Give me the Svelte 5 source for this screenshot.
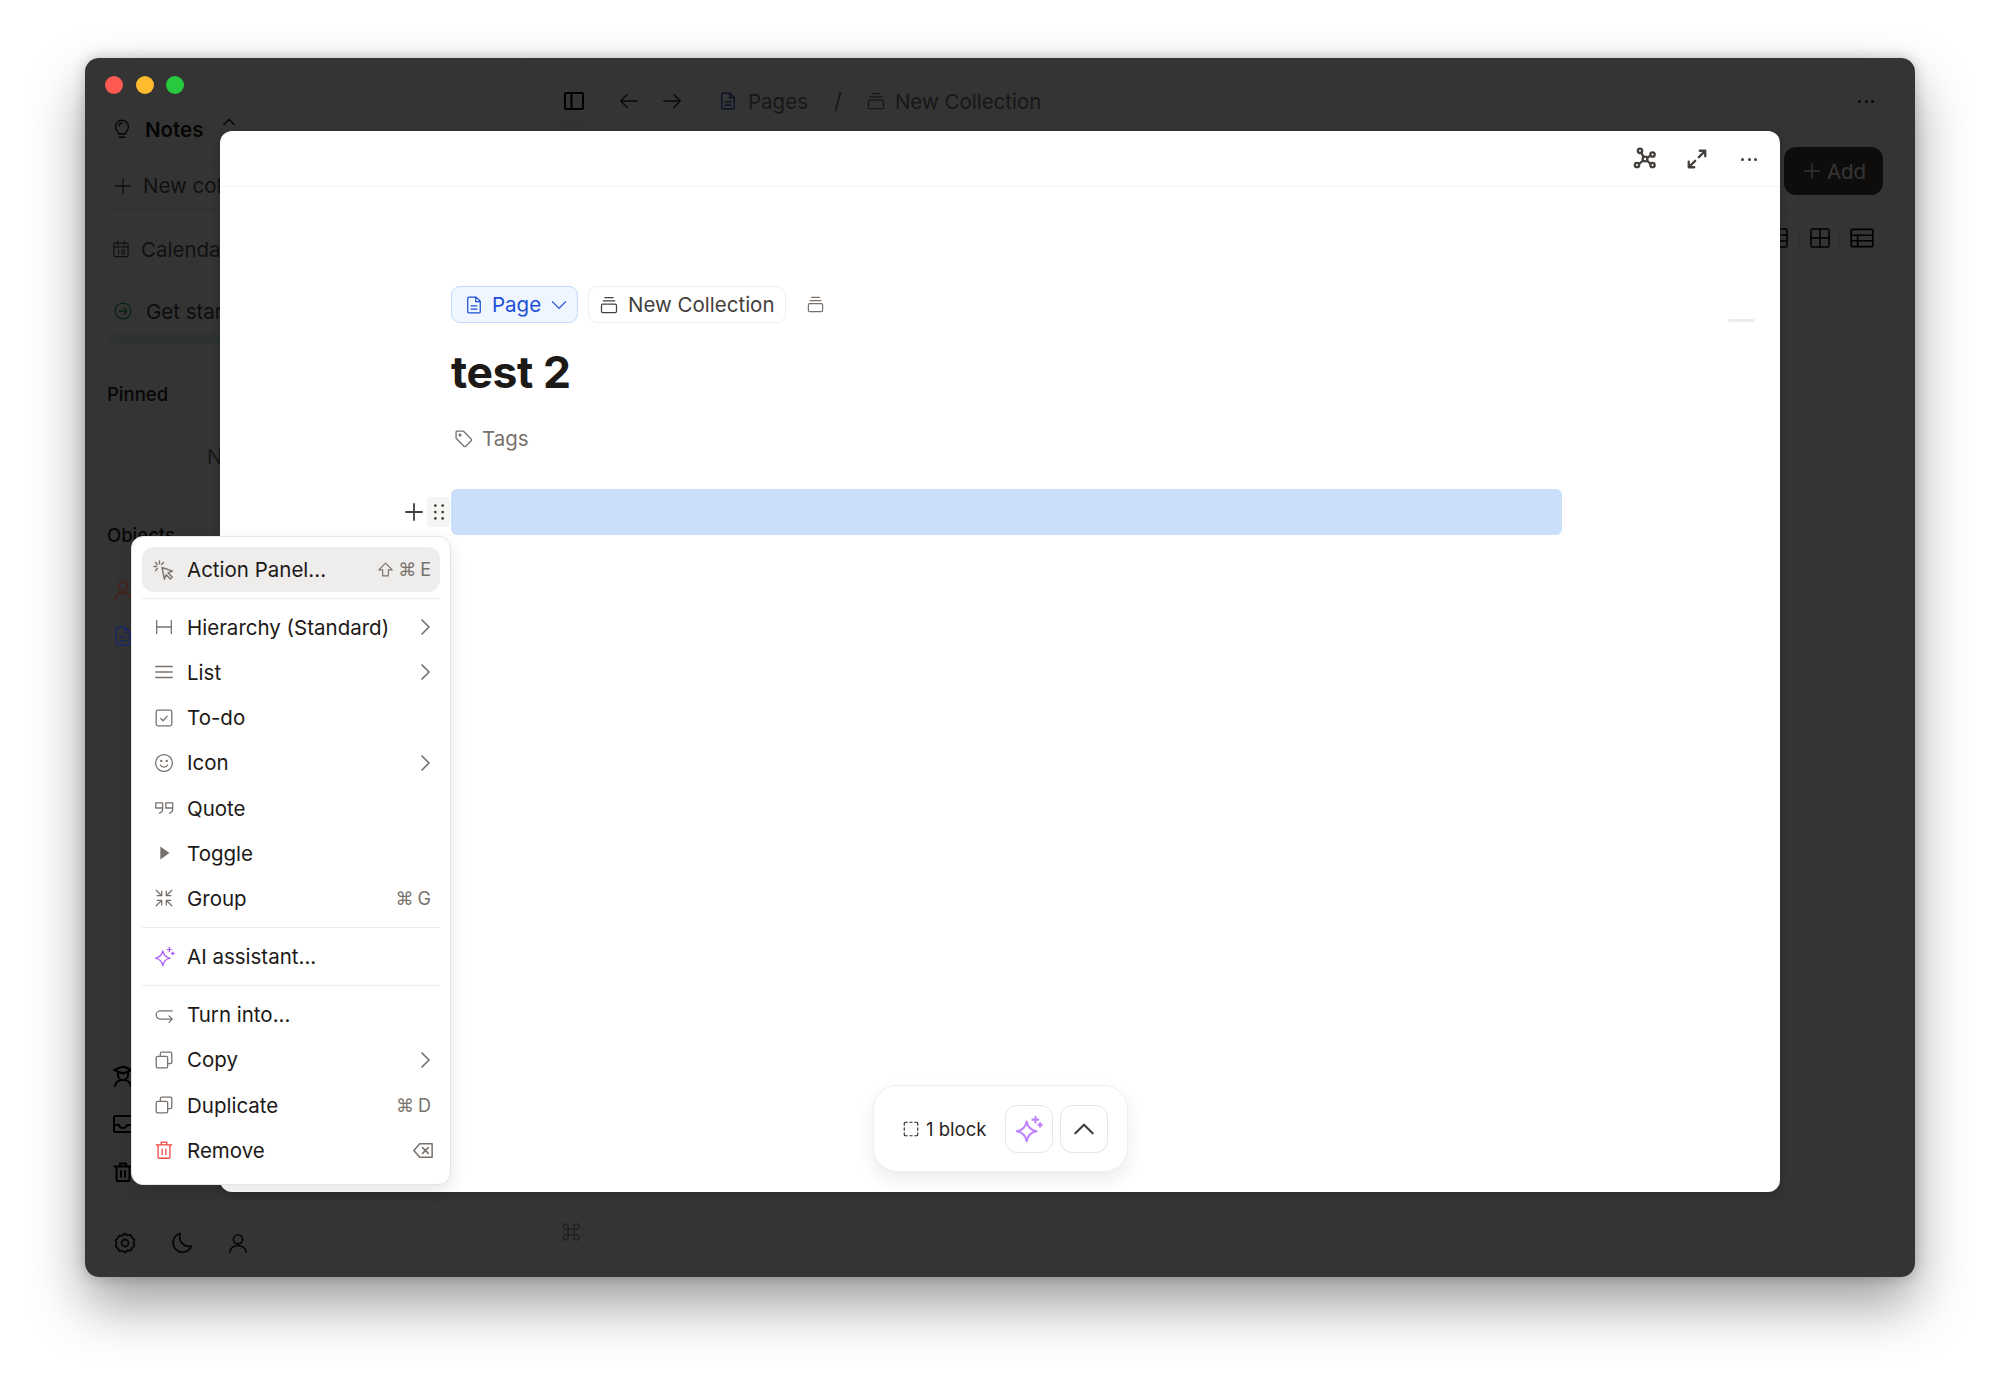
<script lang="ts">
  const icons: Record<string, string> = {
    cursor: '<path d="M10 9.5l10.5 3.6-4.4 1.8 4.2 4.2-1.9 1.9-4.2-4.2-1.8 4.4z"/><path d="M7.5 3v2.7M2 8.5h2.7M3.5 4.5l1.9 1.9M3.5 12.5l1.9-1.9M11.5 4.5l-1.9 1.9"/>',
    heading: '<path d="M4 5v14M20 5v14M4 12h16"/>',
    list: '<path d="M3 6h18M3 12h18M3 18h18"/>',
    todo: '<rect x="3.5" y="3.5" width="17" height="17" rx="2"/><path d="M8.5 12.5l2.5 2.5 4.5-5"/>',
    smile: '<circle cx="12" cy="12" r="9.2"/><path d="M8 14.2c1 1.6 2.4 2.3 4 2.3s3-.7 4-2.3"/><circle cx="9" cy="9.7" r=".6"/><circle cx="15" cy="9.7" r=".6"/>',
    quote: '<path d="M10.5 12H3V6.5h7.5V13c0 2.5-1.5 4-3.5 4.5M21.5 12H14V6.5h7.5V13c0 2.5-1.5 4-3.5 4.5"/>',
    toggle: '<path d="M8 5l10 7-10 7z" fill="currentColor" stroke="none"/>',
    group: '<path d="M3.5 3.5L9 9M9.5 4.5v5h-5M20.5 3.5L15 9M14.5 4.5v5h5M3.5 20.5L9 15M9.5 19.5v-5h-5M20.5 20.5L15 15M14.5 19.5v-5h5"/>',
    sparkle: '<path d="M10 5.5c.9 5 3.5 7.6 8.5 8.5-5 .9-7.6 3.5-8.5 8.5-.9-5-3.5-7.6-8.5-8.5 5-.9 7.6-3.5 8.5-8.5z"/><path d="M17.5 1.5v5M15 4h5M21.5 7v3M20 8.5h3"/>',
    turn: '<path d="M21 7.5H8a4.5 4.5 0 0 0 0 9h13M17.5 13l3.5 3.5-3.5 3.5"/>',
    copy: '<rect x="3.5" y="8" width="12.5" height="12.5" rx="1.5"/><path d="M8 8V5a1.5 1.5 0 0 1 1.5-1.5H19A1.5 1.5 0 0 1 20.5 5v9.5A1.5 1.5 0 0 1 19 16h-3"/>',
    trash: '<path d="M3.5 6.5h17M9 6.5v-3h6v3M5.5 6.5v13A1.5 1.5 0 0 0 7 21h10a1.5 1.5 0 0 0 1.5-1.5v-13M10 11v6M14 11v6"/>',
    chevron: '<path d="M9 5l7 7-7 7"/>',
    doc: '<path d="M6 2.5h8.5l5 5V20a1.5 1.5 0 0 1-1.5 1.5H6A1.5 1.5 0 0 1 4.5 20V4A1.5 1.5 0 0 1 6 2.5zM14 2.5V8h5.5M8.5 13h7M8.5 17h7"/>',
    stack: '<path d="M7 3h10M5 7h14"/><rect x="3" y="11" width="18" height="10" rx="1.5"/>',
    tag: '<path d="M3.5 4.5a1 1 0 0 1 1-1h7.3l9 9a1.5 1.5 0 0 1 0 2.1l-6.2 6.2a1.5 1.5 0 0 1-2.1 0l-9-9z"/><circle cx="8" cy="8" r="1" fill="currentColor"/>',
    graph: '<circle cx="12" cy="12" r="2.4"/><circle cx="7" cy="3.8" r="2.2"/><circle cx="19.5" cy="7.5" r="2.2"/><circle cx="4" cy="18" r="2.2"/><circle cx="19.5" cy="18" r="2.2"/><path d="M8.2 5.8l2.5 4M17.4 8.7l-3.3 2M6 16.8l4-3.2M17.5 16.8L14 13.5"/>',
    expand: '<path d="M14 10l7-7M15 3h6v6M10 14l-7 7M3 15v6h6"/>',
    dashed: '<path d="M3 7V4.5A1.5 1.5 0 0 1 4.5 3H7M10.5 3h3M17 3h2.5A1.5 1.5 0 0 1 21 4.5V7M21 10.5v3M21 17v2.5a1.5 1.5 0 0 1-1.5 1.5H17M13.5 21h-3M7 21H4.5A1.5 1.5 0 0 1 3 19.5V17M3 13.5v-3"/>',
    chevronUp: '<path d="M4 16l8-8 8 8"/>',
    chevronDown: '<path d="M4 8l8 8 8-8"/>',
    bulb: '<path d="M8.5 17.5c0-2-3.5-3.5-3.5-8a7 7 0 0 1 14 0c0 4.5-3.5 6-3.5 8zM9 21h6M12 5.5a4 4 0 0 0-3.5 3"/>',
    plus: '<path d="M12 4v16M4 12h16"/>',
    calendar: '<rect x="3.5" y="5" width="17" height="16" rx="1.5"/><path d="M3.5 9.5h17M8 2.5V7M16 2.5V7M9 13v5M13 13h3v2.5h-3V18h3"/>',
    arrowCircle: '<circle cx="12" cy="12" r="9.5"/><path d="M7.5 12h9M13 8l3.5 4-3.5 4"/>',
    user: '<circle cx="12" cy="8" r="5"/><path d="M3 22c.8-4.5 4-7 9-7s8.2 2.5 9 7"/>',
    cap: '<path d="M3 6l9-3.5L21 6l-9 3.5zM7 8v3a5 5 0 0 0 10 0V8M4 22c.8-4 3.5-6 8-6s7.2 2 8 6"/>',
    inbox: '<rect x="3" y="4" width="18" height="16" rx="1.5"/><path d="M3 13h5c.5 2 2 3 4 3s3.5-1 4-3h5"/>',
    gear: '<path d="M12 2.5l2.6 1.8 3.1-.3 1.4 2.8 2.4 2-1 3 1 3-2.4 2-1.4 2.8-3.1-.3L12 21.5l-2.6-1.8-3.1.3-1.4-2.8-2.4-2 1-3-1-3 2.4-2 1.4-2.8 3.1.3z"/><circle cx="12" cy="12" r="3.5"/>',
    moon: '<path d="M10 2.5a9.5 9.5 0 1 0 11.5 12.5C14.5 17 8 11 10 2.5z"/>',
    panel: '<rect x="3" y="4" width="18" height="16" rx="1"/><path d="M9.5 4v16"/>',
    arrowLeft: '<path d="M21 12H3M10 5l-7 7 7 7"/>',
    arrowRight: '<path d="M3 12h18M14 5l7 7-7 7"/>',
    grid: '<rect x="3" y="3" width="18" height="18" rx="1.5"/><path d="M12 3v18M3 12h18"/>',
    table: '<rect x="2" y="4" width="20" height="16" rx="1"/><path d="M2 9.5h20M2 14.5h20M8 9.5V20"/>',
    board: '<rect x="3" y="3" width="18" height="18" rx="1.5"/><path d="M3 9h18M3 15h18M13 3v18"/>',
    command: '<path d="M9 9h6v6H9zM9 9H6.5A2.5 2.5 0 1 1 9 6.5zM15 9V6.5A2.5 2.5 0 1 1 17.5 9zM15 15h2.5a2.5 2.5 0 1 1-2.5 2.5zM9 15v2.5A2.5 2.5 0 1 1 6.5 15z"/>',
    shift: '<path d="M12 3l9.5 9.5H16V21H8v-8.5H2.5z"/>',
    backspace: '<path d="M8 5h13v14H8l-6-7zM11 9l6 6M17 9l-6 6"/>',
    grip: '<circle cx="8" cy="5" r="1.5" fill="currentColor" stroke="none"/><circle cx="16" cy="5" r="1.5" fill="currentColor" stroke="none"/><circle cx="8" cy="12" r="1.5" fill="currentColor" stroke="none"/><circle cx="16" cy="12" r="1.5" fill="currentColor" stroke="none"/><circle cx="8" cy="19" r="1.5" fill="currentColor" stroke="none"/><circle cx="16" cy="19" r="1.5" fill="currentColor" stroke="none"/>',
  };

  type MenuItem = { label?: string; icon?: string; size?: number; keys?: string[]; shift?: boolean; more?: boolean; tone?: string; active?: boolean; erase?: boolean; sep?: boolean };

  const menu: MenuItem[] = [
    { label: 'Action Panel...', icon: 'cursor', size: 24, keys: ['⌘', 'E'], shift: true, active: true },
    { sep: true },
    { label: 'Hierarchy (Standard)', icon: 'heading', more: true },
    { label: 'List', icon: 'list', more: true },
    { label: 'To-do', icon: 'todo' },
    { label: 'Icon', icon: 'smile', more: true },
    { label: 'Quote', icon: 'quote' },
    { label: 'Toggle', icon: 'toggle' },
    { label: 'Group', icon: 'group', keys: ['⌘', 'G'] },
    { sep: true },
    { label: 'AI assistant...', icon: 'sparkle', size: 21, tone: 'ai' },
    { sep: true },
    { label: 'Turn into...', icon: 'turn' },
    { label: 'Copy', icon: 'copy', more: true },
    { label: 'Duplicate', icon: 'copy', keys: ['⌘', 'D'] },
    { label: 'Remove', icon: 'trash', tone: 'danger', erase: true },
  ];
</script>

{#snippet icon(name: string, size = 20, weight = 1.5)}
  <svg class="ico" width={size} height={size} viewBox="0 0 24 24" fill="none" stroke="currentColor" stroke-width={weight} stroke-linecap="round" stroke-linejoin="round">{@html icons[name]}</svg>
{/snippet}

<div class="page">
  <div class="window">
    <aside class="sidebar">
      <div class="brand">
        {@render icon('bulb', 22)}
        <span>Notes</span>
        <span class="brand-caret">{@render icon('chevronUp', 16, 2)}</span>
      </div>
      <button class="new-btn">{@render icon('plus', 22)}<span>New collection</span></button>
      <div class="side-row calendar">{@render icon('calendar', 20)}<span>Calendar</span></div>
      <div class="side-row started">
        <span class="started-ico">{@render icon('arrowCircle', 20)}</span><span>Get started</span>
      </div>
      <div class="progress"></div>
      <div class="side-title pinned">Pinned</div>
      <div class="empty">Nothing pinned yet</div>
      <div class="side-title objects">Objects</div>
      <div class="object person">{@render icon('user', 22)}</div>
      <div class="object pages">{@render icon('doc', 22)}</div>
      <div class="side-tools">
        {@render icon('cap', 24, 2)}
        {@render icon('inbox', 24, 2)}
        {@render icon('trash', 24, 2)}
      </div>
      <div class="side-footer">
        {@render icon('gear', 24, 1.8)}
        {@render icon('moon', 24, 1.8)}
        {@render icon('user', 22, 1.8)}
      </div>
    </aside>

    <main class="main">
      <div class="panel">
        <header class="panel-head">
          <button class="square">{@render icon('panel', 24, 2)}</button>
          <span class="nav first">{@render icon('arrowLeft', 22)}</span>
          <span class="nav">{@render icon('arrowRight', 22)}</span>
          <span class="crumb-doc">{@render icon('doc', 20)}</span>
          <span class="crumb">Pages</span>
          <span class="crumb slash">/</span>
          <span class="crumb-stack">{@render icon('stack', 20)}</span>
          <span class="crumb">New Collection</span>
          <span class="panel-more"><i></i><i></i><i></i></span>
        </header>
        <div class="panel-actions">
          <button class="add">{@render icon('plus', 22)}<span>Add</span></button>
        </div>
        <div class="views">
          <span class="view">{@render icon('board', 24)}</span>
          <button class="square view-on">{@render icon('grid', 24)}</button>
          <span class="view">{@render icon('table', 26)}</span>
        </div>
        <div class="panel-foot">
          <button class="square ghost">{@render icon('command', 24)}</button>
        </div>
      </div>
    </main>

    <div class="scrim"></div>

    <div class="lights"><i class="red"></i><i class="amber"></i><i class="green"></i></div>

    <section class="modal">
      <header class="modal-head">
        <span class="head-ico">{@render icon('graph', 24, 2.3)}</span>
        <span class="head-ico">{@render icon('expand', 22, 2.5)}</span>
        <span class="head-ico dots"><i></i><i></i><i></i></span>
      </header>
      <div class="doc">
        <div class="chips">
          <button class="chip chip-type">{@render icon('doc', 20)}<span>Page</span><span class="chip-caret">{@render icon('chevronDown', 20)}</span></button>
          <button class="chip chip-set">{@render icon('stack', 20)}<span>New Collection</span></button>
          <span class="chip-extra">{@render icon('stack', 19)}</span>
        </div>
        <h1>test 2</h1>
        <div class="tags">{@render icon('tag', 21)}<span>Tags</span></div>
        <div class="block">
          <span class="gutter-plus">{@render icon('plus', 24, 1.8)}</span>
          <span class="gutter-grip">{@render icon('grip', 22)}</span>
        </div>
      </div>
      <div class="outline-dash"></div>
      <div class="selection">
        <span class="sel-count">{@render icon('dashed', 18)}<span>1 block</span></span>
        <button class="sel-btn ai">{@render icon('sparkle', 28, 1.8)}</button>
        <button class="sel-btn">{@render icon('chevronUp', 26, 2)}</button>
      </div>
    </section>

    <nav class="menu">
      {#each menu as item}
        {#if item.sep}
          <div class="menu-sep"></div>
        {:else}
          <div class="menu-item" class:active={item.active}>
            <span class="menu-ico {item.tone ?? ''}">{@render icon(item.icon ?? 'list', item.size ?? 22, 1.4)}</span>
            <span class="menu-label">{item.label}</span>
            {#if item.keys}
              <span class="menu-keys">
                {#if item.shift}{@render icon('shift', 17, 1.6)}{/if}
                {#each item.keys as key}
                  <span class:glyph={key === '⌘'}>{key}</span>
                {/each}
              </span>
            {/if}
            {#if item.more}<span class="menu-more">{@render icon('chevron', 24, 1.7)}</span>{/if}
            {#if item.erase}<span class="menu-erase">{@render icon('backspace', 23, 1.6)}</span>{/if}
          </div>
        {/if}
      {/each}
    </nav>
  </div>
</div>

<style>
  :global(body) {
    margin: 0;
    background: #fff;
  }

  .page {
    width: 2000px;
    height: 1390px;
    box-sizing: border-box;
    padding: 58px 85px 113px;
    font-family: Inter, "Liberation Sans", sans-serif;
    color: #1c1917;
    overflow: hidden;
  }

  .window {
    position: relative;
    display: flex;
    height: 100%;
    border-radius: 14px;
    background: #fff;
    box-shadow: 0 28px 55px rgba(0, 0, 0, 0.38), 0 0 14px rgba(0, 0, 0, 0.22);
  }

  button {
    font: inherit;
    color: inherit;
    background: none;
    border: none;
    padding: 0;
  }

  .ico { display: block; flex-shrink: 0; }

  /* background app, dimmed by the scrim */
  .sidebar {
    width: 439px;
    flex-shrink: 0;
    display: flex;
    flex-direction: column;
    box-sizing: border-box;
    padding: 58px 13px 22px;
    border-right: 1px solid #f5f5f4;
    font-size: 20.5px;
    color: #44403c;
  }

  .brand {
    display: flex;
    align-items: center;
    gap: 12px;
    height: 26px;
    padding-left: 13px;
    font-weight: 600;
    color: #1c1917;
  }

  .brand-caret { margin-left: 6px; margin-top: -14px; }

  .new-btn {
    display: flex;
    align-items: center;
    gap: 9px;
    height: 47px;
    margin-top: 20px;
    padding-left: 13px;
    border: 1px solid #e7e5e4;
    border-radius: 12px;
    font-size: 20.5px;
    color: #57534e;
  }

  .side-row {
    display: flex;
    align-items: center;
    gap: 10px;
    height: 26px;
    padding-left: 13px;
    color: #57534e;
  }

  .calendar { margin-top: 27px; }
  .started { margin-top: 36px; gap: 13px; padding-left: 15px; color: #44403c; }
  .started-ico { color: #16a34a; }

  .progress {
    height: 10px;
    margin: 10px 0 0 11px;
    border-radius: 5px;
    background: #dcfce7;
  }

  .side-title {
    padding-left: 9px;
    font-size: 18.5px;
    font-weight: 500;
    color: #292524;
  }

  .pinned { margin-top: 39px; }

  .empty {
    margin-top: 39px;
    padding-left: 109px;
    color: #78716c;
  }

  .objects { margin-top: 55px; }

  /* these two keep their tint through the scrim */
  .object {
    position: relative;
    z-index: 1;
    padding-left: 14px;
  }

  .person { margin-top: 33px; color: #4a1f14; }
  .pages { margin-top: 24px; color: #17296b; }

  .side-tools {
    display: flex;
    flex-direction: column;
    gap: 24px;
    margin-top: auto;
    padding-left: 13px;
    color: #000;
  }

  .side-footer {
    display: flex;
    align-items: center;
    gap: 33px;
    margin-top: 47px;
    padding-left: 15px;
    color: #1c1917;
  }

  .main {
    flex: 1;
    min-width: 0;
    padding: 14px 13px 14px 14px;
  }

  .panel {
    display: flex;
    flex-direction: column;
    height: 100%;
    box-sizing: border-box;
    border: 1px solid #ebe9e7;
    border-radius: 16px;
  }

  .panel-head {
    display: flex;
    align-items: center;
    height: 60px;
    flex-shrink: 0;
    box-sizing: border-box;
    padding: 0 14px 3px;
    border-bottom: 1px solid #f0efee;
    font-size: 20.5px;
    color: #78716c;
  }

  .square {
    display: flex;
    align-items: center;
    justify-content: center;
    width: 41px;
    height: 42px;
    flex-shrink: 0;
    border: 1px solid #ebe9e7;
    border-radius: 12px;
    color: #000;
  }

  .nav { margin-left: 21px; color: #292524; }
  .nav.first { margin-left: 24px; }
  .crumb-doc { margin-left: 35px; color: #1e40af; }
  .crumb { margin-left: 10px; }
  .slash { margin-left: 26px; font-size: 22px; }
  .crumb-stack { margin-left: 24px; }
  .crumb-stack + .crumb { margin-left: 9px; }

  .panel-more {
    display: flex;
    gap: 3.5px;
    margin-left: auto;
    margin-right: 13px;
  }

  .panel-more i {
    width: 3px;
    height: 3px;
    border-radius: 50%;
    background: #292524;
  }

  .panel-actions {
    display: flex;
    justify-content: flex-end;
    padding: 14px 18px 15px;
    border-bottom: 1px solid #f0efee;
  }

  .add {
    display: flex;
    align-items: center;
    gap: 4px;
    width: 99px;
    height: 48px;
    justify-content: center;
    border-radius: 12px;
    background: #44403c;
    color: #fff;
    font-size: 20.5px;
  }

  .views {
    display: flex;
    align-items: center;
    justify-content: flex-end;
    gap: 9px;
    padding: 6px 26px 0 0;
    color: #000;
  }

  .panel-foot {
    margin-top: auto;
    padding: 0 0 9px 11px;
  }

  .square.ghost {
    color: #a8a29e;
    border-color: #f3f2f1;
  }

  .scrim {
    position: absolute;
    inset: 0;
    border-radius: 14px;
    background: rgba(0, 0, 0, 0.795);
  }

  .lights {
    position: absolute;
    top: 18px;
    left: 20px;
    display: flex;
    gap: 12.5px;
  }

  .lights i {
    width: 18px;
    height: 18px;
    border-radius: 50%;
  }

  .red { background: #ff5a52; }
  .amber { background: #febb2e; }
  .green { background: #27c93f; }

  /* page modal */
  .modal {
    position: absolute;
    z-index: 2;
    top: 73px;
    left: 135px;
    width: 1560px;
    height: 1061px;
    border-radius: 12px;
    background: #fff;
    box-shadow: 0 2px 8px rgba(0, 0, 0, 0.2);
  }

  .modal-head {
    display: flex;
    align-items: center;
    justify-content: flex-end;
    gap: 28px;
    height: 56px;
    box-sizing: border-box;
    padding: 1px 19px 0 0;
    border-bottom: 1.5px solid #f3f3f2;
    color: #44403c;
  }

  .head-ico {
    display: flex;
    align-items: center;
    justify-content: center;
    width: 24px;
    height: 24px;
  }

  .dots { gap: 3.5px; }

  .dots i {
    width: 3px;
    height: 3px;
    border-radius: 50%;
    background: #44403c;
    flex-shrink: 0;
  }

  .doc {
    width: 1111px;
    margin-left: 231px;
    padding-top: 99px;
  }

  .chips {
    display: flex;
    align-items: center;
    gap: 10px;
  }

  .chip {
    display: flex;
    align-items: center;
    height: 37px;
    box-sizing: border-box;
    border-radius: 9px;
    font-size: 20.5px;
    gap: 8px;
  }

  .chip-type {
    width: 127px;
    padding-left: 12px;
    border: 1px solid #bfdbfe;
    background: #eff6ff;
    color: #1d4ed8;
  }

  .chip-set {
    width: 198px;
    padding-left: 10px;
    gap: 9px;
    border: 1px solid #f0efee;
    color: #44403c;
  }

  .chip-extra {
    margin-left: 10px;
    color: #78716c;
  }

  h1 {
    margin: 18px 0 0;
    font-size: 44.5px;
    line-height: 62px;
    font-weight: 700;
    letter-spacing: -0.01em;
    color: #1c1917;
  }

  .tags {
    display: flex;
    align-items: center;
    gap: 8px;
    height: 28px;
    margin-top: 21px;
    padding-left: 2px;
    font-size: 20.5px;
    color: #78716c;
  }

  .block {
    position: relative;
    height: 46px;
    margin-top: 37px;
    border-radius: 6px;
    background: #cbdffb;
  }

  .gutter-plus {
    position: absolute;
    left: -49px;
    top: 11px;
    color: #44403c;
  }

  .gutter-grip {
    position: absolute;
    left: -24px;
    top: 8px;
    display: flex;
    align-items: center;
    justify-content: center;
    width: 23px;
    height: 30px;
    border-radius: 4px;
    background: #f5f5f4;
    color: #44403c;
  }

  .outline-dash {
    position: absolute;
    top: 188px;
    right: 25px;
    width: 27px;
    height: 3px;
    border-radius: 2px;
    background: #ececec;
  }

  .selection {
    position: absolute;
    top: 954px;
    left: 653px;
    display: flex;
    align-items: center;
    gap: 7px;
    width: 255px;
    height: 87px;
    box-sizing: border-box;
    padding: 0 19px 0 28px;
    border: 1.5px solid #eeeeed;
    border-radius: 24px;
    background: #fff;
    box-shadow: 0 8px 18px rgba(0, 0, 0, 0.08);
  }

  .sel-count {
    display: flex;
    align-items: center;
    gap: 6px;
    margin-right: auto;
    font-size: 18.5px;
    color: #292524;
  }

  .sel-btn {
    display: flex;
    align-items: center;
    justify-content: center;
    width: 48px;
    height: 48px;
    box-sizing: border-box;
    border: 1.5px solid #e7e5e4;
    border-radius: 12px;
    color: #44403c;
  }

  .sel-btn.ai { color: #c084fc; }

  /* block context menu */
  .menu {
    position: absolute;
    z-index: 3;
    top: 478px;
    left: 46px;
    width: 320px;
    box-sizing: border-box;
    padding: 10px 10px 11px;
    border: 1px solid #e7e5e4;
    border-radius: 12px;
    background: #fff;
    box-shadow: 0 6px 16px rgba(0, 0, 0, 0.1);
    font-size: 20.5px;
    color: #1c1917;
  }

  .menu-item {
    display: flex;
    align-items: center;
    height: 45.2px;
    padding: 0 9px 0 12px;
    border-radius: 12px;
  }

  .menu-item.active { background: #eeedeb; }

  .menu-ico {
    display: flex;
    justify-content: center;
    width: 20px;
    margin-right: 13px;
    color: #78716c;
  }

  .menu-ico.ai { color: #a855f7; }
  .menu-ico.danger { color: #ef4444; }

  .menu-keys {
    display: flex;
    align-items: center;
    gap: 4px;
    margin-left: auto;
    font-size: 18px;
    color: #78716c;
  }

  .glyph { font-family: "DejaVu Sans", sans-serif; }

  .menu-more {
    margin-left: auto;
    margin-right: -6px;
    color: #78716c;
  }

  .menu-erase {
    margin-left: auto;
    margin-right: -4px;
    color: #78716c;
  }

  .menu-sep {
    height: 1.5px;
    margin: 5.5px 0 6px;
    background: #eeedeb;
  }

  .menu-item.active + .menu-sep { margin-bottom: 5.5px; }
</style>
